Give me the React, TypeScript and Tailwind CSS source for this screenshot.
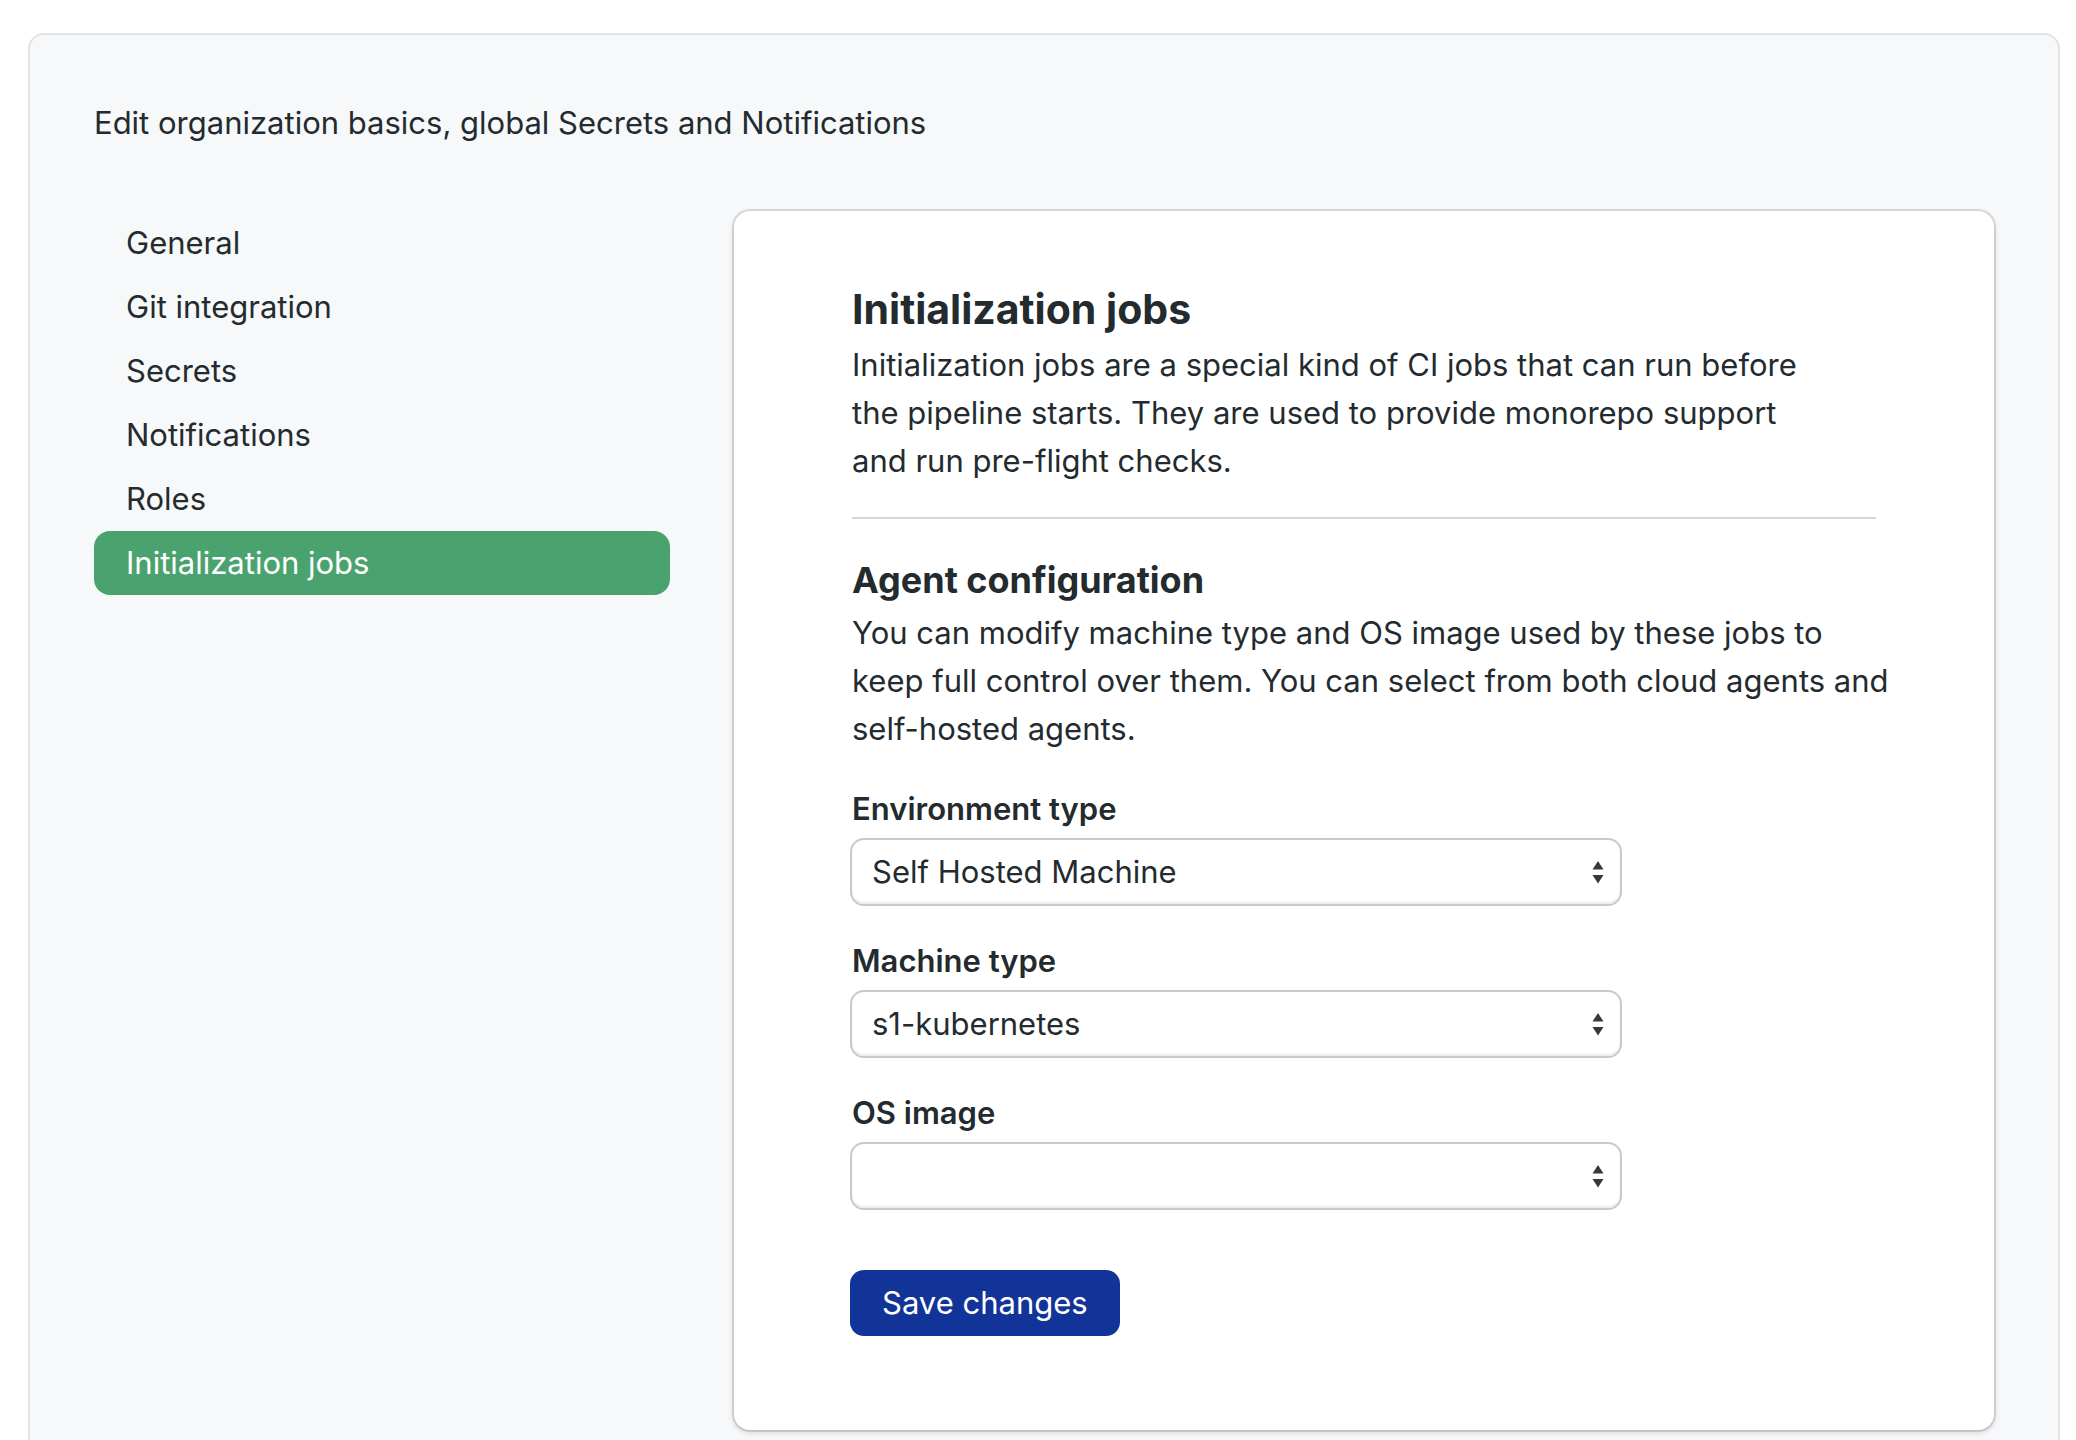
const navItems = ["General", "Git integration", "Secrets", "Notifications", "Roles", "Initialization jobs"];

const fields = [
  { id: "environment-type", label: "Environment type", value: "Self Hosted Machine" },
  { id: "machine-type", label: "Machine type", value: "s1-kubernetes" },
  { id: "os-image", label: "OS image", value: "" },
];

function SelectField({ id, label, value }: { id: string; label: string; value: string }) {
  return (
    <div className="flex flex-col">
      <label htmlFor={id} className="mb-[5px] font-semibold">
        {label}
      </label>
      <div className="relative -ml-0.5 w-full max-w-[772px]">
        <select
          id={id}
          defaultValue={value}
          className="h-[68px] w-full appearance-none rounded-[14px] border-2 border-[#c9cacb] bg-white pr-14 pl-5 shadow-[inset_0_-2px_2px_rgba(0,0,0,0.08)]"
        >
          <option value={value}>{value}</option>
        </select>
        <svg
          viewBox="0 0 12 24"
          aria-hidden="true"
          className="pointer-events-none absolute top-[22px] right-[18px] h-6 w-3 fill-[#35393d]"
        >
          <path d="M6 1 L11.5 9.5 H0.5 Z M0.5 15 H11.5 L6 23.5 Z" />
        </svg>
      </div>
    </div>
  );
}

export default function App() {
  return (
    <div className="flex min-h-screen bg-white pt-[33px] pr-4 pl-7 font-['Inter',sans-serif] text-[31px] leading-[48px] text-[#232b2f]">
      <main className="flex-1 rounded-t-2xl border-2 border-b-0 border-[#e1e3e5] bg-[#f6f8fa] px-16 pt-16">
        <p>Edit organization basics, global Secrets and Notifications</p>
        <div className="mt-16 flex items-start gap-16">
          <nav className="w-[576px] shrink-0">
            <ul>
              {navItems.map((item) => (
                <li key={item}>
                  <a
                    href="#"
                    aria-current={item === "Initialization jobs" ? "page" : undefined}
                    className="block rounded-2xl px-8 py-2 aria-[current=page]:bg-[#4aa36f] aria-[current=page]:text-white"
                  >
                    {item}
                  </a>
                </li>
              ))}
            </ul>
          </nav>
          <section className="flex-1 rounded-2xl bg-white px-[118px] pt-[70px] pb-[94px] shadow-[0_0_0_2px_rgba(0,0,0,0.1),0_2px_6px_rgba(0,0,0,0.18)]">
            <h1 className="mb-1 text-[41px] leading-[56px] font-bold">Initialization jobs</h1>
            <p className="max-w-[960px]">
              Initialization jobs are a special kind of CI jobs that can run before the pipeline starts. They are used
              to provide monorepo support and run pre-flight checks.
            </p>
            <hr className="mt-8 border-t-2 border-[#d3d7d8]" />
            <h2 className="mt-9 mb-1 text-[36px] leading-[50px] font-bold">Agent configuration</h2>
            <p className="-mr-6">
              You can modify machine type and OS image used by these jobs to keep full control over them. You can select
              from both cloud agents and self-hosted agents.
            </p>
            <form className="mt-8 flex flex-col gap-[31px]">
              {fields.map((field) => (
                <SelectField key={field.id} {...field} />
              ))}
              <button
                type="button"
                className="mt-[29px] -ml-0.5 h-[66px] self-start rounded-[14px] bg-[#123499] px-8 text-white"
              >
                Save changes
              </button>
            </form>
          </section>
        </div>
      </main>
    </div>
  );
}
